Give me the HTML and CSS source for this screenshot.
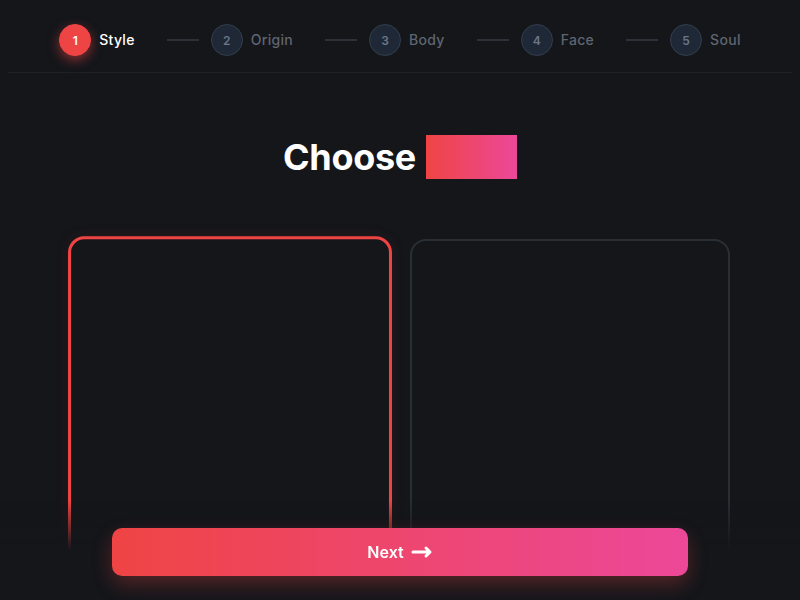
FILE: index.html
```html
<!DOCTYPE html>
<html lang="en">
<head>
<meta charset="utf-8">
<title>Choose</title>
<link rel="stylesheet" href="styles.css">
</head>
<body>
<header class="stepper">
  <div class="step active"><span class="num">1</span><span class="label">Style</span></div>
  <span class="connector"></span>
  <div class="step"><span class="num">2</span><span class="label">Origin</span></div>
  <span class="connector"></span>
  <div class="step"><span class="num">3</span><span class="label">Body</span></div>
  <span class="connector"></span>
  <div class="step"><span class="num">4</span><span class="label">Face</span></div>
  <span class="connector"></span>
  <div class="step"><span class="num">5</span><span class="label">Soul</span></div>
</header>
<main class="content">
  <h1 class="title">Choose <span class="accent"></span></h1>
  <div class="cards">
    <div class="card selected"></div>
    <div class="card"></div>
  </div>
</main>
<footer class="footer">
  <button class="next">Next
    <svg class="arrow" width="22" height="14" viewBox="0 0 22 14" fill="none" stroke="#fff" stroke-width="3" stroke-linecap="round" stroke-linejoin="round"><path d="M2 7h17M15 3l4 4-4 4"/></svg>
  </button>
</footer>
</body>
</html>
```
FILE: styles.css
```css
* { box-sizing: border-box; }
html, body { margin: 0; padding: 0; }
body {
  background: #14161a;
  font-family: Inter, "Noto Sans", sans-serif;
  color: #fff;
  min-height: 600px;
  overflow: hidden;
}
.stepper {
  display: flex;
  align-items: center;
  justify-content: center;
  margin: 0 8px;
  padding: 24px 0 16px;
  border-bottom: 1px solid #1e2127;
}
.step {
  display: flex;
  align-items: center;
  gap: 8px;
}
.num {
  width: 32px;
  height: 32px;
  border-radius: 50%;
  display: flex;
  align-items: center;
  justify-content: center;
  font-size: 12px;
  font-weight: 600;
  background: #1f2836;
  border: 1px solid #333d4d;
  color: #6b7688;
}
.label {
  font-size: 14px;
  font-weight: 500;
  line-height: 18px;
  color: #5f6570;
  letter-spacing: 0.3px;
  margin-right: 32px;
  margin-top: -1px;
}
.step:last-child .label { margin-right: 0; }
.step.active .num {
  background: #ef4444;
  border-color: #ef4444;
  color: #fff;
  box-shadow: 0 4px 12px rgba(239, 68, 68, 0.55);
}
.step.active .label { color: #fff; }
.connector {
  width: 32px;
  height: 2px;
  background: #2c3139;
  margin-right: 12px;
}
.content {
  display: flex;
  flex-direction: column;
  align-items: center;
  padding-top: 62px;
}
.title {
  margin: 0;
  font-size: 36px;
  line-height: 44px;
  font-weight: 700;
  display: flex;
  align-items: center;
  gap: 10px;
  letter-spacing: -0.3px;
}
.accent {
  display: inline-block;
  width: 91px;
  height: 44px;
  background: linear-gradient(90deg, #ef4444, #ec4899);
}
.cards {
  margin-top: 60px;
  display: grid;
  grid-template-columns: 320px 320px;
  gap: 20px;
}
.card {
  height: 430px;
  border: 2px solid #2a2e35;
  border-radius: 16px;
  background: #14161a;
}
.card.selected {
  border: 3px solid #ef4444;
  transform: scale(1.0125);
  box-shadow: 0 0 16px rgba(239, 68, 68, 0.08);
}
.footer {
  position: fixed;
  left: 0;
  right: 0;
  bottom: 0;
  display: flex;
  justify-content: center;
  padding: 40px 0 24px;
  background: linear-gradient(180deg, rgba(20, 22, 26, 0) 12px, #14161a 62px);
}
.next {
  width: 576px;
  height: 48px;
  border: 0;
  border-radius: 10px;
  background: linear-gradient(90deg, #ef4444, #ec4899);
  color: #fff;
  font-family: Inter, "Noto Sans", sans-serif;
  font-size: 16px;
  font-weight: 600;
  display: flex;
  align-items: center;
  justify-content: center;
  gap: 7px;
  box-shadow: 0 8px 20px rgba(239, 68, 68, 0.3);
}
.arrow { display: block; }
```
